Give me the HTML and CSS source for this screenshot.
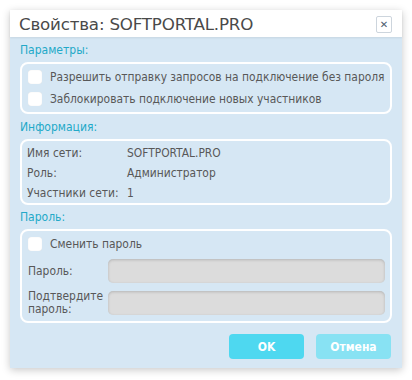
FILE: index.html
```html
<!DOCTYPE html>
<html lang="ru">
<head>
    <meta charset="UTF-8">
    <title>Свойства: SOFTPORTAL.PRO</title>
    <link rel="stylesheet" href="styles.css">
</head>
<body>
    <div class="dialog">
        <div class="titlebar">
            <span class="title">Свойства: SOFTPORTAL.PRO</span>
            <span class="close">&#x2715;</span>
        </div>

        <div class="dialog-body">
            <div class="section-label">Параметры:</div>
            <div class="group">
                <label class="check-row"><span class="checkbox"></span>Разрешить отправку запросов на подключение без пароля</label>
                <label class="check-row"><span class="checkbox"></span>Заблокировать подключение новых участников</label>
            </div>

            <div class="section-label">Информация:</div>
            <div class="group info">
                <div class="info-row"><span class="info-key">Имя сети:</span><span>SOFTPORTAL.PRO</span></div>
                <div class="info-row"><span class="info-key">Роль:</span><span>Администратор</span></div>
                <div class="info-row"><span class="info-key">Участники сети:</span><span>1</span></div>
            </div>

            <div class="section-label">Пароль:</div>
            <div class="group password">
                <label class="check-row"><span class="checkbox"></span>Сменить пароль</label>
                <div class="field-row">
                    <span class="field-label">Пароль:</span>
                    <span class="field"></span>
                </div>
                <div class="field-row second">
                    <span class="field-label">Подтвердите пароль:</span>
                    <span class="field"></span>
                </div>
            </div>

            <div class="buttons">
                <button class="btn btn-ok">OK</button>
                <button class="btn btn-cancel">Отмена</button>
            </div>
        </div>
    </div>
</body>
</html>
```

FILE: styles.css
```css
* {
    margin: 0;
    padding: 0;
    box-sizing: border-box;
}

body {
    font-family: "DejaVu Sans Condensed", "Liberation Sans", sans-serif;
    background: #ffffff;
    width: 412px;
    height: 380px;
    overflow: hidden;
}

.dialog {
    margin: 10px 0 0 10px;
    width: 392px;
    height: 358px;
    background: #d6e7f4;
    box-shadow: 0 2px 8px rgba(0, 0, 0, 0.22);
}

.titlebar {
    height: 27px;
    background: #ffffff;
    display: flex;
    align-items: center;
    justify-content: space-between;
    padding: 1px 10px 0 9px;
    box-shadow: 0 1px 2px rgba(0, 0, 0, 0.08);
    position: relative;
}

.title {
    font-family: "DejaVu Sans", Verdana, sans-serif;
    font-size: 16.7px;
    color: #4a4a4a;
    letter-spacing: -0.2px;
}

.close {
    width: 16px;
    height: 17px;
    border: 1px solid #cdd5dd;
    border-radius: 2px;
    font-family: "DejaVu Sans", sans-serif;
    font-size: 10px;
    font-weight: bold;
    color: #4d5d6d;
    display: flex;
    align-items: center;
    justify-content: center;
}

.dialog-body {
    padding: 6px 10px 0 10px;
}

.section-label {
    font-size: 12px;
    line-height: 14px;
    color: #22a9c8;
    margin-bottom: 5px;
}

.group {
    border: 2px solid #ffffff;
    border-radius: 8px;
    padding: 2px 0 2px 6px;
    margin-bottom: 6px;
}

.check-row {
    display: flex;
    align-items: center;
    height: 22px;
    font-size: 11.9px;
    color: #585858;
}

.checkbox {
    width: 14px;
    height: 14px;
    background: #ffffff;
    border-radius: 3px;
    margin-right: 8px;
    box-shadow: inset 0 0 1px rgba(0, 0, 0, 0.15);
}

.info {
    padding: 2px 0 0 5px;
    margin-bottom: 5px;
}

.info-row {
    display: flex;
    align-items: center;
    height: 20px;
    font-size: 11.9px;
    color: #585858;
}

.info-key {
    width: 100px;
}

.password {
    padding: 2px 5px 6px 6px;
    margin-bottom: 11px;
}

.field-row {
    display: flex;
    align-items: center;
    margin-top: 4px;
    height: 24px;
}

.field-row.second {
    margin-top: 8px;
}

.field-label {
    width: 80px;
    font-size: 11.9px;
    line-height: 13px;
    color: #585858;
}

.field {
    flex: 1;
    height: 24px;
    background: #dcdcdc;
    border-radius: 5px;
    box-shadow: inset 0 1px 3px rgba(0, 0, 0, 0.18);
}

.buttons {
    display: flex;
    justify-content: flex-end;
    gap: 12px;
    padding-right: 1px;
}

.btn {
    width: 75px;
    height: 25px;
    border: none;
    border-radius: 4px;
    font-family: "DejaVu Sans Condensed", "Liberation Sans", sans-serif;
    font-size: 12px;
    font-weight: bold;
    color: #ffffff;
}

.btn-ok {
    background: #4ed8f0;
}

.btn-cancel {
    background: #88e2f3;
}
```
